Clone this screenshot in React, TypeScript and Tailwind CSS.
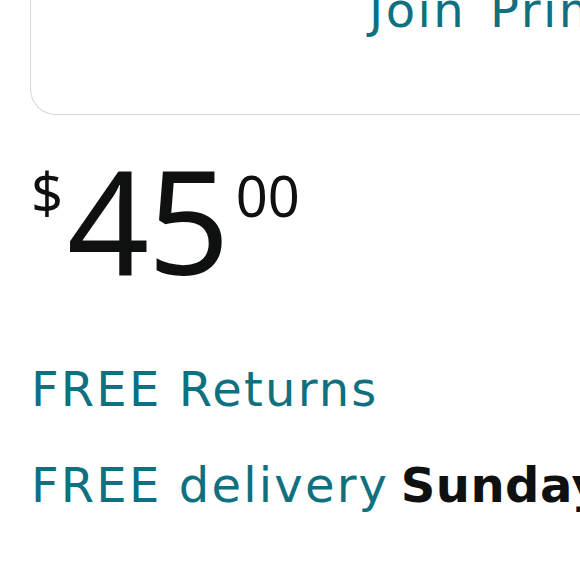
import React from "react";

const teal = "text-[#0f7080]";
const line = "pl-[31px] text-[48px] leading-[48px] tracking-[2.2px] whitespace-nowrap font-['DejaVu_Sans',sans-serif]";

export default function App() {
  return (
    <div className="w-[580px] h-[580px] overflow-hidden bg-white font-['Noto_Sans',sans-serif] text-[#0f1111]">
      {/* prime card, top is scrolled off */}
      <div className="flow-root ml-[30px] w-[600px] h-[115px] border-x border-b border-[#d5d9d9] rounded-b-[26px]">
        <div className={`pl-[338px] -mt-[14px] text-[48px] leading-[48px] tracking-[2.5px] whitespace-nowrap font-['DejaVu_Sans',sans-serif] ${teal}`}>
          Join <span className="ml-[6px]">Prime</span>
        </div>
      </div>

      <div className="mt-[32px] pl-[31px] flex items-start">
        <span className="text-[56px] leading-[56px] mt-[17px]">$</span>
        <span className="text-[144px] leading-[144px] tracking-[-2px] ml-[4px]">45</span>
        <span className="text-[56px] leading-[56px] mt-[20px] ml-[8px]">00</span>
      </div>

      <div className={`mt-[74px] ${line} ${teal}`}>FREE Returns</div>
      <div className={`mt-[48px] ${line} ${teal}`}>
        FREE delivery <span className="-ml-[6px] font-bold tracking-[0.5px] text-[#0f1111]">Sunday, June 2</span>
      </div>
    </div>
  );
}
